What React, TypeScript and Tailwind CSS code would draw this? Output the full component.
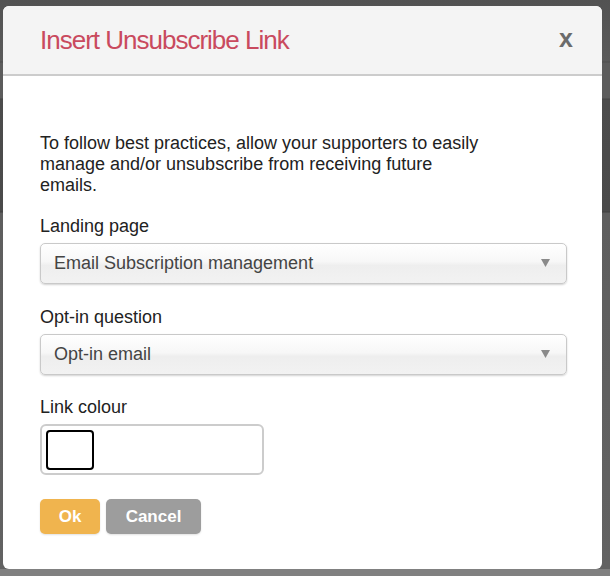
import React from "react";

function Select({ value }: { value: string }) {
  return (
    <div className="relative flex h-[41px] w-[527px] items-center rounded-[5px] border border-[#c9c9c9] bg-[linear-gradient(to_bottom,#ffffff_0%,#f7f7f7_45%,#eeeeee_55%,#f2f2f2_100%)] pl-[13px] shadow-[0_1px_2px_rgba(0,0,0,0.18)]">
      <span className="text-[18px] leading-[21px] text-[#444]">{value}</span>
      <svg
        className="absolute right-[16px] top-[15px]"
        width="9"
        height="8"
        viewBox="0 0 9 8"
      >
        <polygon points="0,0 9,0 4.5,8" fill="#8a8a8a" />
      </svg>
    </div>
  );
}

export default function App() {
  return (
    <div
      className="h-[576px] w-[610px] overflow-hidden bg-[linear-gradient(to_bottom,#525252_0px,#5a5a5a_61px,#4d4d4d_62px,#5c5c5c_63px,#5c5c5c_98px,#444_99px,#4c4c4c_100px,#4a4a4a_211px,#3f3f3f_212px,#5e5e5e_213px,#626262_569px,#808080_569px,#808080_576px)] pl-[3px] pt-[6px]"
      style={{ fontFamily: '"Liberation Sans", Arial, sans-serif' }}
    >
      <div className="flex h-[563px] w-[599px] flex-col overflow-hidden rounded-[6px] bg-white">
        <div className="flex h-[70px] shrink-0 items-center justify-between border-b-2 border-[#cccccc] bg-[#f4f4f4] pl-[37px] pr-[29px]">
          <h1 className="text-[26px] leading-[30px] tracking-[-1px] text-[#c94a5e]">
            Insert Unsubscribe Link
          </h1>
          <span className="pb-[3px] text-[25px] font-bold leading-[25px] text-[#6b6b6b]">
            x
          </span>
        </div>
        <div className="flex flex-col pl-[37px] pt-[57px] text-[#222]">
          <p className="w-[445px] text-[18px] leading-[21px]">
            To follow best practices, allow your supporters to easily manage
            and/or unsubscribe from receiving future emails.
          </p>
          <label className="mt-[20px] text-[18px] leading-[21px]">
            Landing page
          </label>
          <div className="mt-[6px]">
            <Select value="Email Subscription management" />
          </div>
          <label className="mt-[23px] text-[18px] leading-[21px]">
            Opt-in question
          </label>
          <div className="mt-[6px]">
            <Select value="Opt-in email" />
          </div>
          <label className="mt-[22px] text-[18px] leading-[21px]">
            Link colour
          </label>
          <div className="mt-[6px] flex h-[51px] w-[224px] items-center rounded-[6px] border-2 border-[#cccccc] bg-white pl-[4px]">
            <div className="h-[40px] w-[48px] rounded-[4px] border-2 border-black bg-white" />
          </div>
          <div className="mt-[24px] flex gap-[6px]">
            <button className="flex h-[35px] w-[60px] items-center justify-center rounded-[5px] bg-[#f0b44e] text-[17px] font-bold text-white shadow-[0_1px_2px_rgba(0,0,0,0.12)]">
              Ok
            </button>
            <button className="flex h-[35px] w-[95px] items-center justify-center rounded-[5px] bg-[#9d9d9d] text-[17px] font-bold text-white shadow-[0_1px_2px_rgba(0,0,0,0.12)]">
              Cancel
            </button>
          </div>
        </div>
      </div>
    </div>
  );
}
